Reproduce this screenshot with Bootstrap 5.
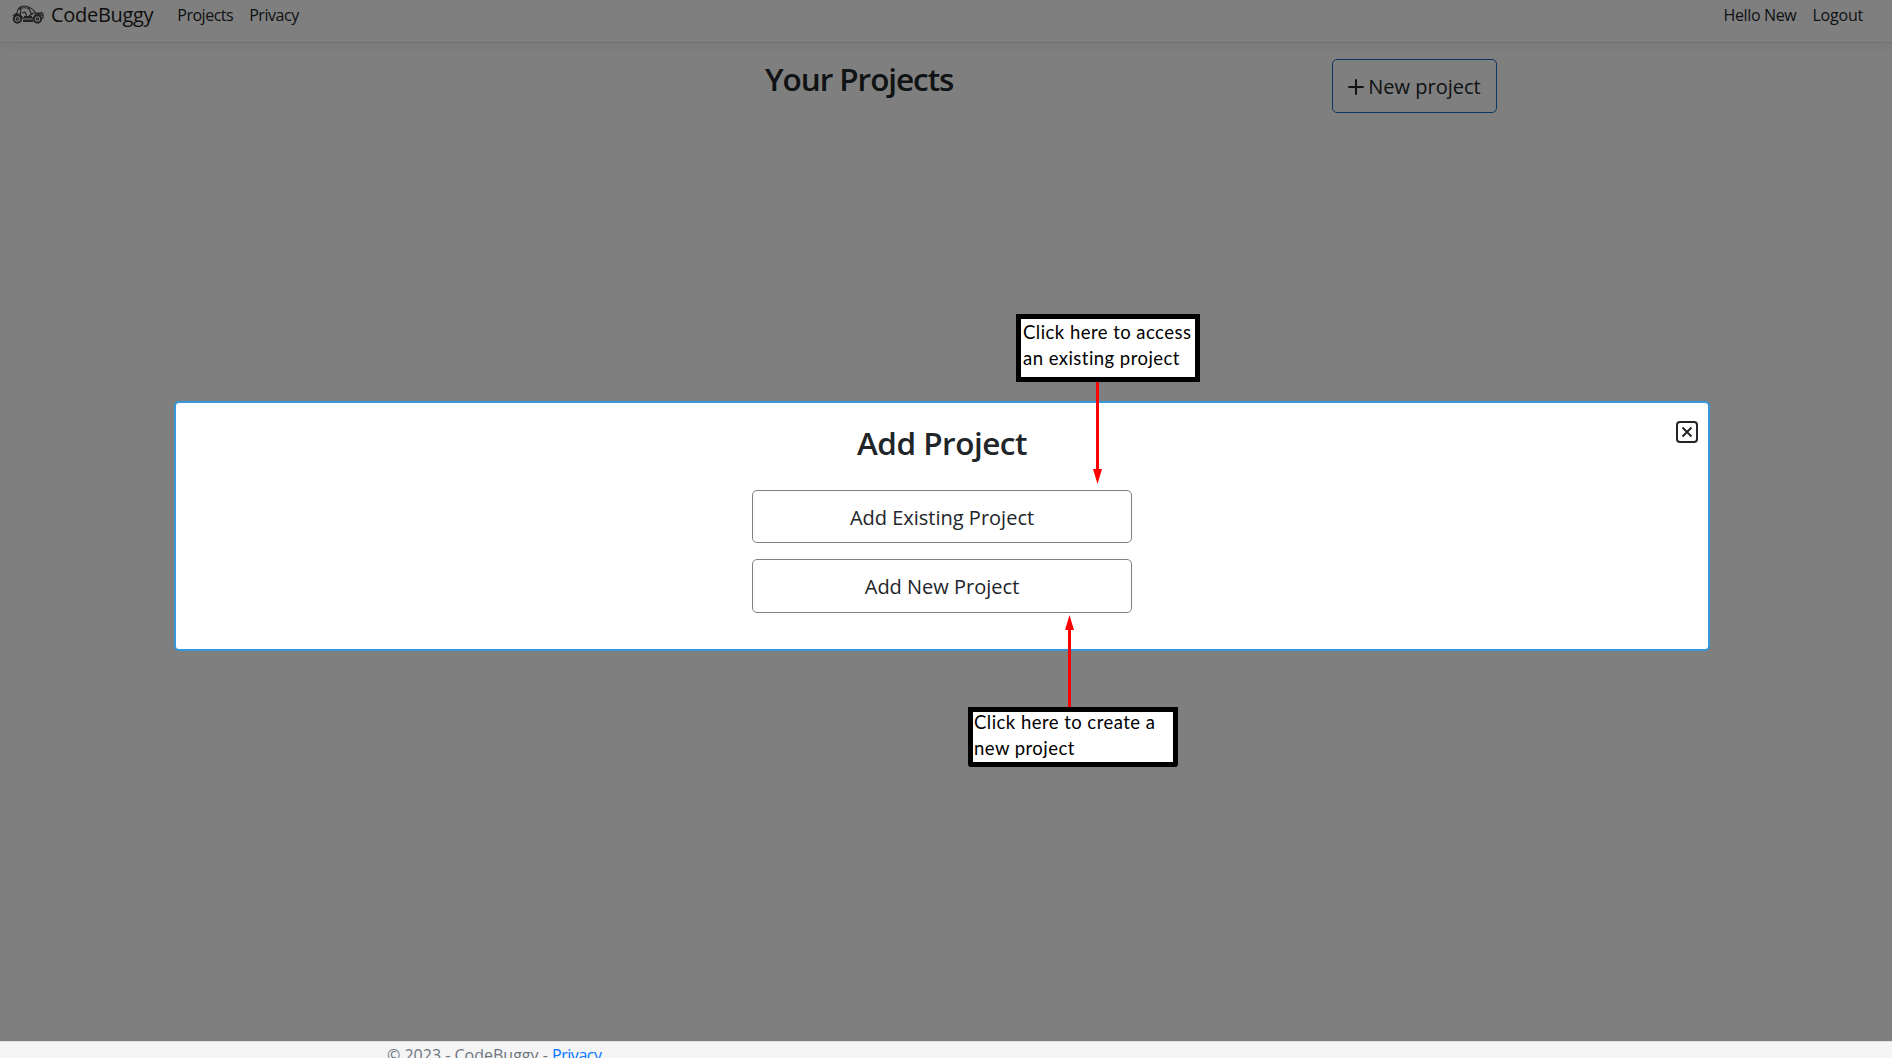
<!DOCTYPE html>
<html lang="en">
<head>
<meta charset="utf-8">
<title>Your Projects - CodeBuggy</title>
<link rel="stylesheet" href="https://cdn.jsdelivr.net/npm/bootstrap@5.3.0/dist/css/bootstrap.min.css">
<style>
  body { font-family: "Open Sans", "Noto Sans", sans-serif; height: 1058px; }
  .page-area { height: 1041px; }
  .site-header { height: 43px; border-bottom: 1px solid #dee2e6; box-shadow: 0 4px 12px rgba(0,0,0,.05); }
  .header-inner { height: 29px; padding-left: 12px; padding-right: 29px; line-height: 24px; }
  .buggy-logo { width: 32px; height: 20px; margin-right: 7px; }
  .brand-name { font-size: 20px; line-height: 30px; letter-spacing: -.3px; margin-right: 24px; color: #1b1d20; }
  .site-nav { gap: 16px; color: #212529; }
  .nav-projects { letter-spacing: -.5px; }
  .nav-privacy { letter-spacing: -.45px; }
  .nav-hello { letter-spacing: -.35px; }
  .nav-logout { letter-spacing: -.2px; }
  .title-row { padding: 16px 395px 0 765px; }
  .page-title { font-size: 31.5px; font-weight: 600; letter-spacing: -1.07px; margin: 1px 0 0; line-height: 38.4px; }
  .btn-new { width: 165px; height: 54px; font-size: 20px; padding: 1px 0 0; border-color: #1b6ec2; border-radius: 5px; }
  .shade { background: rgba(0,0,0,.5); }
  .dialog-panel { left: 174px; top: 401px; width: 1536px; height: 250px; background: #fff; border: 2px solid #3498db; border-radius: 5px; padding-top: 21px; }
  .dialog-title { font-size: 31.5px; font-weight: 600; line-height: 38.4px; letter-spacing: -.5px; margin: 0 0 27.6px; }
  .choice-list { width: 380px; gap: 16px; }
  .btn-choice { height: 53px; font-size: 20px; padding: 2px 0 0; border: 1px solid #808080; border-radius: 5px; color: #212529; background: #fff; }
  .btn-choice + .btn-choice { height: 54px; padding-top: 1px; }
  .close-box { right: 10px; top: 18px; width: 22px; height: 22px; }
  .callout { background: #fff; border: 5px solid #000; font-family: Lato, "Open Sans", sans-serif; font-size: 18.5px; line-height: 26px; letter-spacing: .46px; color: #000; white-space: nowrap; }
  .callout-existing { left: 1016px; top: 314px; width: 184px; height: 68px; padding: 0 0 0 2px; }
  .callout-create { left: 968px; top: 707px; width: 210px; height: 60px; padding: 0 0 0 1px; border-radius: 0 0 3px 3px; }
  .callout-create div { margin-top: -3px; }
  .arrow-down { left: 1093px; top: 382px; }
  .arrow-up { left: 1065px; top: 615px; }
  .site-footer { height: 17px; background: #f5f5f5; border-top: 1px solid #dee2e6; padding: 1px 0 0 387px; line-height: 24px; color: #6c757d; }
  .site-footer a { color: #0077ff; text-decoration: none; letter-spacing: -.45px; }
</style>
</head>
<body class="overflow-hidden position-relative">
<div class="page-area position-relative">
  <header class="site-header">
    <div class="header-inner d-flex align-items-center">
      <svg class="buggy-logo" viewBox="0 0 32 20" fill="none" stroke="#444" stroke-width="1.2">
        <path d="M4.500 9 Q6 1 12 1 Q19 1 24 8.500 M7 4 Q12 1.500 18 4 M9 3 L8 12 M16.500 3 L20 10"/>
        <path d="M1 11 Q5 7 9 11 L12 14 H20 L23 11 Q27 6 30.500 11 M10 8 L13 7 L15 12 M17 11 L21 8 L29 8 M3 9 L9 10 M22 10 L29 10"/>
        <path d="M11 16 H21 M12 12 L20 12" stroke-width="2.200"/>
        <circle cx="5.500" cy="14" r="3.700" stroke-width="2"/><circle cx="5.500" cy="14" r="1.200"/>
        <circle cx="25.500" cy="14" r="3.700" stroke-width="2"/><circle cx="25.500" cy="14" r="1.200"/>
        <path d="M29 7 L31 9 V14"/>
      </svg>
      <span class="brand-name">CodeBuggy</span>
      <nav class="site-nav d-flex flex-grow-1">
        <span class="nav-projects">Projects</span><span class="nav-privacy">Privacy</span>
        <span class="nav-hello ms-auto">Hello New</span><span class="nav-logout">Logout</span>
      </nav>
    </div>
  </header>
  <main class="title-row d-flex justify-content-between align-items-start">
    <h2 class="page-title">Your Projects</h2>
    <button class="btn btn-new d-flex align-items-center justify-content-center">
      <svg width="16" height="16" viewBox="0 0 16 16" class="me-1" stroke="#212529" stroke-width="2" stroke-linecap="round"><path d="M8 1V15M1 8H15"/></svg>
      <span>New project</span>
    </button>
  </main>
  <div class="shade position-absolute top-0 start-0 w-100 h-100"></div>
</div>
<footer class="site-footer">© 2023 - CodeBuggy - <a href="#">Privacy</a></footer>

<section class="dialog-panel position-absolute d-flex flex-column align-items-center">
  <h2 class="dialog-title">Add Project</h2>
  <div class="choice-list d-flex flex-column">
    <button class="btn btn-choice">Add Existing Project</button>
    <button class="btn btn-choice">Add New Project</button>
  </div>
  <svg class="close-box position-absolute" viewBox="0 0 22 22" fill="none" stroke="#212529" stroke-width="2">
    <rect x="1" y="1" width="20" height="20" rx="3"/><path d="M6.500 6.500L15.500 15.500M15.500 6.500L6.500 15.500"/>
  </svg>
</section>

<div class="callout callout-existing position-absolute">Click here to access<br>an existing project</div>
<svg class="arrow-down position-absolute" width="9" height="103" fill="#f00"><path d="M3 0H6V87H9L4.500 102L0 87H3Z"/></svg>
<div class="callout callout-create position-absolute"><div>Click here to create a<br>new project</div></div>
<svg class="arrow-up position-absolute" width="9" height="92" fill="#f00"><path d="M3 92H6V15H9L4.500 0L0 15H3Z"/></svg>
<script src="https://cdn.jsdelivr.net/npm/bootstrap@5.3.0/dist/js/bootstrap.bundle.min.js"></script>
</body>
</html>
